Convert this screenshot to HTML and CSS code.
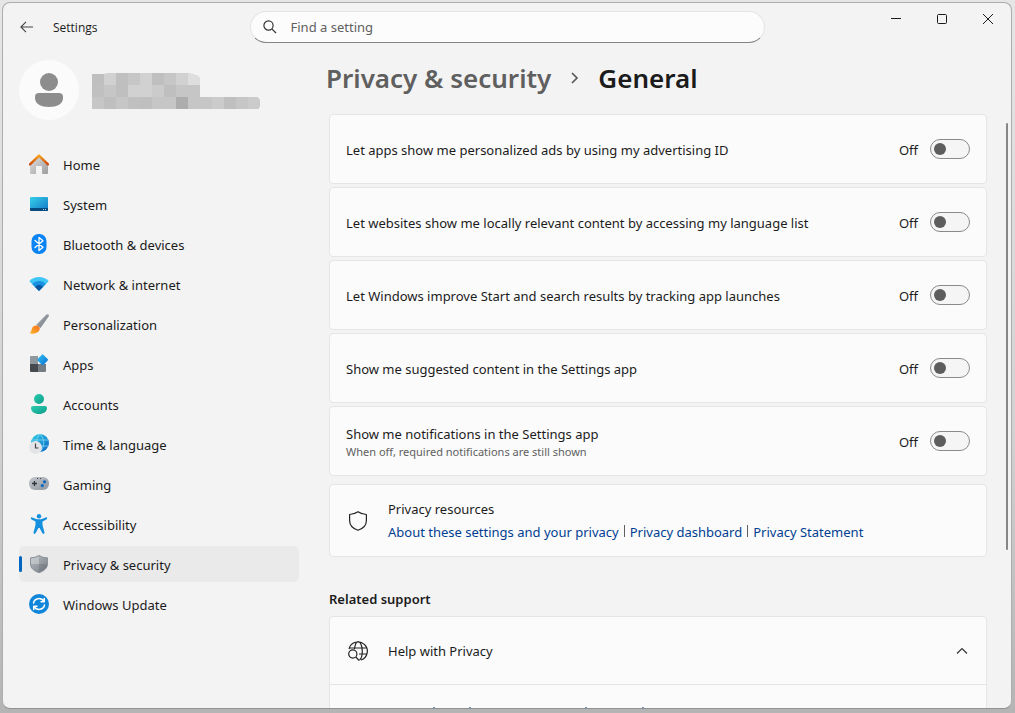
FILE: index.html
```html
<!DOCTYPE html>
<html lang="en">
<head>
<meta charset="utf-8">
<title>Settings</title>
<link rel="stylesheet" href="styles.css">
</head>
<body>
<div class="window">
  <header class="titlebar">
    <div class="titlebar-start">
      <button class="back" aria-label="Back"><svg width="14" height="12" viewBox="0 0 14 12" fill="none" stroke="#444" stroke-width="1.1"><path d="M6 .8.9 6 6 11.200M1 6h12"/></svg></button>
      <span class="app-name">Settings</span>
    </div>
    <div class="search">
      <svg width="14" height="14" viewBox="0 0 14 14" fill="none" stroke="#333" stroke-width="1.2"><circle cx="5.500" cy="5.500" r="4.600"/><path d="M8.800 8.800 13 13"/></svg>
      <input type="search" placeholder="Find a setting" aria-label="Find a setting">
    </div>
    <div class="caption-buttons">
      <button aria-label="Minimize"><svg width="12" height="12" viewBox="0 0 12 12" stroke="#1a1a1a"><path d="M1 5.500h10"/></svg></button>
      <button aria-label="Maximize"><svg width="12" height="12" viewBox="0 0 12 12" fill="none" stroke="#1a1a1a"><rect x="1.500" y="1.500" width="9" height="9" rx="1"/></svg></button>
      <button aria-label="Close"><svg width="12" height="12" viewBox="0 0 12 12" stroke="#1a1a1a"><path d="m1 1 10 10M11 1 1 11"/></svg></button>
    </div>
  </header>

  <div class="body">
    <aside class="sidebar">
      <div class="account">
        <div class="avatar"><svg width="28" height="34" viewBox="0 0 28 34" fill="#8d8d8d"><circle cx="14" cy="9" r="9"/><path d="M4 20h20a4 4 0 0 1 4 4v1c0 6-6 9-14 9S0 31 0 25v-1a4 4 0 0 1 4-4z"/></svg></div>
        <svg class="account-name" width="168" height="37" viewBox="0 0 168 37" role="img" aria-label="Account name hidden">
          <defs><clipPath id="mask"><path d="M0 2h12q4-1 12-1h66q14 0 18 5v19h56q4 0 4 6t-3 6H0z"/></clipPath></defs>
          <g clip-path="url(#mask)"><g transform="translate(0 1)">
            <path fill="#c6c6c6" d="M0 0h168v36H0z"/>
            <path fill="#bfbfbf" d="M0 0h12v12H0zM24 0h12v12H24zM60 0h12v12H60zM24 12h12v12H24zM72 12h12v12H72zM12 24h12v12H12zM48 24h12v12H48zM132 24h12v12h-12z"/>
            <path fill="#d1d1d1" d="M12 0h12v12H12zM48 0h12v12H48zM84 0h12v12H84zM36 12h12v12H36zM48 12h12v12H48z"/>
            <path fill="#dedede" d="M96 0h12v12H96z"/>
            <path fill="#c0c0c0" d="M0 12h12v12H0zM36 24h12v12H36z"/>
            <path fill="#adadad" d="M84 24h12v12H84z"/>
            <path fill="#cbcbcb" d="M60 12h12v12H60zM156 24h12v12h-12zM120 24h12v12h-12z"/>
          </g></g>
        </svg>
      </div>

      <nav class="nav" aria-label="Settings">
        <a href="#home">
          <svg width="20" height="20" viewBox="0 0 20 20"><defs><linearGradient id="h1" x2="1" y2="1"><stop stop-color="#e3e3e3"/><stop offset="1" stop-color="#9d9d9d"/></linearGradient><linearGradient id="h2" x2="0" y2="1"><stop stop-color="#f7a11b"/><stop offset="1" stop-color="#cf4a0c"/></linearGradient></defs><path fill="url(#h1)" d="M1 9 10 1l9 8v10a1 1 0 0 1-1 1h-5v-7.500a.5.5 0 0 0-.5-.5h-5a.5.5 0 0 0-.5.5V20H2a1 1 0 0 1-1-1z"/><path d="m1 10.300 9-8.700 9 8.700" fill="none" stroke="url(#h2)" stroke-width="2.400" stroke-linecap="round" stroke-linejoin="round"/></svg>
          <span>Home</span></a>
        <a href="#system">
          <svg width="20" height="20" viewBox="0 0 20 20"><defs><linearGradient id="s1" x2="1" y2="1"><stop stop-color="#36cfe9"/><stop offset="1" stop-color="#1277c8"/></linearGradient></defs><rect x="1" y="3" width="18" height="14" rx="1" fill="url(#s1)"/><path fill="#094a7e" d="M1 14h18v2a1 1 0 0 1-1 1H2a1 1 0 0 1-1-1z"/><path fill="#9cdcff" d="M14 15h1v1h-1zM16 15h1v1h-1z"/></svg>
          <span>System</span></a>
        <a href="#bluetooth">
          <svg width="20" height="20" viewBox="0 0 20 20"><rect x="2.500" width="15" height="20" rx="7" fill="#0a84f4"/><path d="m6 6.500 8 6.800-4 3.200v-13l4 3.200-8 6.800" fill="none" stroke="#fff" stroke-width="1.300" stroke-linejoin="round" stroke-linecap="round"/></svg>
          <span>Bluetooth &amp; devices</span></a>
        <a href="#network">
          <svg width="20" height="20" viewBox="0 0 20 20"><path fill="#3fc6f5" d="M.3 7.200C5.500 1.600 14.500 1.600 19.700 7.200L10 17z"/><path fill="#1791e0" d="M3.200 10.100c3.800-4.200 9.800-4.200 13.600 0L10 17z"/><path fill="#0b559f" d="M6.100 13c2.200-2.600 5.600-2.600 7.800 0l-3.500 3.600q-.4.400-.8 0z"/></svg>
          <span>Network &amp; internet</span></a>
        <a href="#personalization">
          <svg width="20" height="20" viewBox="0 0 20 20"><defs><linearGradient id="p1" x2="1" y2="1"><stop stop-color="#b5bac0"/><stop offset="1" stop-color="#6a7079"/></linearGradient><linearGradient id="p2" x1="1" x2="0" y2="1"><stop stop-color="#f3701e"/><stop offset="1" stop-color="#fdb52a"/></linearGradient></defs><path fill="url(#p1)" d="M17.500.4q1.300-.5 2 .2.700.8.1 2L11.500 14 7.300 10.800z"/><path fill="url(#p2)" d="M7.200 11.400c2.600-.2 4.400 2.300 3.200 4.800C8.800 19.400 4 20.400.4 19.200c2.400-1.300 1.700-3 2.600-5 .8-1.800 2.300-2.700 4.200-2.800z"/></svg>
          <span>Personalization</span></a>
        <a href="#apps">
          <svg width="20" height="20" viewBox="0 0 20 20"><defs><linearGradient id="a1" x2="1" y2="1"><stop stop-color="#2fc3f4"/><stop offset="1" stop-color="#0a6fd0"/></linearGradient></defs><path fill="#8f979f" d="M2 2h7v8H1V3a1 1 0 0 1 1-1z"/><path fill="#454a4f" d="M1 10h8v8H2a1 1 0 0 1-1-1z"/><path fill="#747c84" d="M9 10h8v7a1 1 0 0 1-1 1H9z"/><path fill="url(#a1)" d="m12.900.7-4.300 4.400a1 1 0 0 0 0 1.400l4.400 4.400a1 1 0 0 0 1.400 0l4.300-4.400a1 1 0 0 0 0-1.400L14.300.7a1 1 0 0 0-1.400 0z"/></svg>
          <span>Apps</span></a>
        <a href="#accounts">
          <svg width="20" height="20" viewBox="0 0 20 20"><defs><linearGradient id="c1" x2="1" y2="1"><stop stop-color="#2bcdb0"/><stop offset="1" stop-color="#0d9c8a"/></linearGradient></defs><g fill="url(#c1)"><circle cx="10" cy="5" r="5"/><path d="M4 12h12a2 2 0 0 1 2 2c0 3.800-3.500 6-8 6s-8-2.200-8-6a2 2 0 0 1 2-2z"/></g></svg>
          <span>Accounts</span></a>
        <a href="#time">
          <svg width="20" height="20" viewBox="0 0 20 20"><defs><linearGradient id="t1" x2="1" y2="1"><stop stop-color="#35d0e4"/><stop offset="1" stop-color="#0b62c4"/></linearGradient></defs><circle cx="11" cy="9" r="9" fill="url(#t1)"/><path fill="none" stroke="#8ce4fa" stroke-width=".7" d="M3 6h16M3 12h16M11 .3c-5 5-5 12.500 0 17.400M11 .3c5 5 5 12.500 0 17.400"/><circle cx="6.500" cy="13.500" r="6.500" fill="#e3e4e7"/><path d="M6.500 9.500V14H9.500" fill="none" stroke="#444" stroke-width="1.200"/></svg>
          <span>Time &amp; language</span></a>
        <a href="#gaming">
          <svg width="20" height="20" viewBox="0 0 20 20"><defs><linearGradient id="g1" x2="1" y2="1"><stop stop-color="#c3c8cd"/><stop offset="1" stop-color="#8e959c"/></linearGradient></defs><rect y="3" width="20" height="13" rx="6" fill="url(#g1)"/><path d="M3 9.500h5M5.500 7v5" stroke="#30353a" stroke-width="1.300"/><path fill="#444" d="M8 4h1v1H8zM11 4h1v1h-1z"/><circle cx="15.500" cy="7.800" r="1.600" fill="#0a67c4"/><circle cx="13.300" cy="11.600" r="1.600" fill="#0a67c4"/></svg>
          <span>Gaming</span></a>
        <a href="#accessibility">
          <svg width="20" height="20" viewBox="0 0 20 20" fill="#1490df"><circle cx="10" cy="2.200" r="2.200"/><path d="M3.200 3.400 8 5.200h4l4.800-1.800c1.500-.4 1.800 1.500.6 2L13.500 7.500V11l2 7.500c.3 1.400-1.700 2-2.200.6L10.600 14h-1.200L6.700 19.100c-.5 1.400-2.500.8-2.200-.6L6.500 11V7.500L2.600 5.400c-1.200-.5-.9-2.400.6-2z"/></svg>
          <span>Accessibility</span></a>
        <a href="#privacy" class="current" aria-current="page">
          <svg width="20" height="20" viewBox="0 0 20 20"><defs><linearGradient id="v1" x2="1" y2="1"><stop stop-color="#b9bfc5"/><stop offset="1" stop-color="#747b82"/></linearGradient></defs><path fill="url(#v1)" stroke="#8c939a" d="M10 1.500q3.500 2.300 8.500 2.300V10c0 4.200-3.500 7-8.500 8.700C5 17 1.500 14.200 1.500 10V3.800q5 0 8.500-2.300z"/><path fill="#d5d9dc" opacity=".5" d="M10 2.500V10H2V4.500Q6.500 4.500 10 2.500z"/><path fill="#60676f" opacity=".3" d="M10 10h8c0 4-3.500 6.700-8 8.200z"/></svg>
          <span>Privacy &amp; security</span></a>
        <a href="#update">
          <svg width="20" height="20" viewBox="0 0 20 20"><circle cx="10" cy="10" r="10" fill="#0f86d9"/><path fill="none" stroke="#fff" stroke-width="1.500" stroke-linecap="round" stroke-linejoin="round" d="M4.500 9C5.500 4 12 3 15 7.500M15.300 4.500v3.300h-3.300M15.500 11c-1 5-7.500 6-10.500 1.500M4.700 15.500v-3.300H8"/></svg>
          <span>Windows Update</span></a>
      </nav>
    </aside>

    <main class="main">
      <h1 class="crumbs"><a href="#privacy">Privacy &amp; security</a><svg width="8" height="12" viewBox="0 0 8 12" fill="none" stroke="#555" stroke-width="1.600"><path d="m1 1 5 5-5 5"/></svg><span>General</span></h1>

      <div class="cards">
        <label class="card"><span class="card-text">Let apps show me personalized ads by using my advertising ID</span><span>Off</span><input type="checkbox" role="switch" class="toggle"></label>
        <label class="card"><span class="card-text">Let websites show me locally relevant content by accessing my language list</span><span>Off</span><input type="checkbox" role="switch" class="toggle"></label>
        <label class="card"><span class="card-text">Let Windows improve Start and search results by tracking app launches</span><span>Off</span><input type="checkbox" role="switch" class="toggle"></label>
        <label class="card"><span class="card-text">Show me suggested content in the Settings app</span><span>Off</span><input type="checkbox" role="switch" class="toggle"></label>
        <label class="card"><span class="card-text">Show me notifications in the Settings app<small>When off, required notifications are still shown</small></span><span>Off</span><input type="checkbox" role="switch" class="toggle"></label>
      </div>

      <section class="card resources">
        <svg width="20" height="20" viewBox="0 0 20 20" fill="none" stroke="#222" stroke-width="1.200" stroke-linejoin="round"><path d="M10 .8q3.500 2.500 8.400 2.700V9.500c0 4.700-3 8-8.400 9.800C4.600 17.500 1.600 14.200 1.600 9.500v-6Q6.500 3.300 10 .8z"/></svg>
        <div>
          <div>Privacy resources</div>
          <div class="links"><a href="#about">About these settings and your privacy</a><a href="#dashboard">Privacy dashboard</a><a href="#statement">Privacy Statement</a></div>
        </div>
      </section>

      <h2 class="section-title">Related support</h2>
      <section class="expander">
        <button class="expander-head" aria-expanded="true">
          <svg width="20" height="20" viewBox="0 0 20 20" fill="none" stroke="#222" stroke-width="1.200"><path d="M1 8A9.300 9.300 0 1 1 13 19M1.500 7h17.200M11 13h7.800M6.500 8C7 3.500 8.500.7 10.300.7S14.300 4.500 14.300 10s-1.300 8-2.800 9"/><circle cx="4.800" cy="13" r="4.100"/><path d="m7.800 16 3.400 3.600"/></svg>
          <span>Help with Privacy</span>
          <svg width="12" height="8" viewBox="0 0 12 8" fill="none" stroke="#333" stroke-width="1.200"><path d="m1 6.500 5-5 5 5"/></svg>
        </button>
        <div class="expander-body">
          <svg width="256" height="2" viewBox="0 0 256 2" fill="#6f8fb8" aria-hidden="true"><path d="M45 1h2v1h-2zM81 1h2v1h-2zM197 1h2v1h-2zM254 1h2v1h-2z"/></svg>
        </div>
      </section>
    </main>
    <div class="scroll-thumb"></div>
  </div>
</div>
</body>
</html>
```
FILE: styles.css
```css
* { box-sizing: border-box; }

body {
  margin: 0;
  height: 100vh;
  padding: 2px 3px 4px 2px;
  display: flex;
  overflow: hidden;
  background: linear-gradient(#e6e6e6, #d2d2d2 60%, #b4b4b4);
  color: #1b1b1b;
  font: 13px/20px "Noto Sans", "Open Sans", sans-serif;
}

button, input { font: inherit; color: inherit; }
button { border: 0; background: none; padding: 0; }
a { color: inherit; text-decoration: none; }
svg { flex: none; display: block; }

.window {
  flex: 1;
  min-width: 0;
  display: flex;
  flex-direction: column;
  overflow: hidden;
  border: 1px solid #adadad;
  border-bottom-color: #929292;
  border-radius: 8px;
  background: #f3f3f3;
}

.titlebar {
  flex: none;
  height: 48px;
  display: grid;
  grid-template-columns: 1fr minmax(0, 515px) 1fr;
  align-items: center;
}
.titlebar-start { display: flex; align-items: center; gap: 19px; padding-left: 17px; }
.back { padding: 4px 0; }
.app-name { font-size: 12px; line-height: 20px; padding-top: 2px; font-family: "Open Sans", "Noto Sans", sans-serif; }

.search {
  height: 32px;
  display: flex;
  align-items: center;
  gap: 14px;
  padding: 0 12px;
  border: 1px solid #e3e3e3;
  border-bottom-color: #858585;
  border-radius: 16px;
  background: #fcfcfc;
}
.search input { flex: 1; min-width: 0; padding: 0; border: 0; outline: 0; background: none; }
.search input::placeholder { color: #606060; opacity: 1; }

.caption-buttons { display: flex; justify-content: flex-end; align-self: start; }
.caption-buttons button { width: 46px; height: 32px; display: grid; place-items: center; }

.body { flex: 1; min-height: 0; display: flex; position: relative; }

.sidebar { flex: none; width: 296px; padding: 9px 0 0 16px; }
.account { display: flex; align-items: center; gap: 13px; margin-bottom: 26px; }
.avatar { width: 60px; height: 60px; display: grid; place-items: center; border-radius: 50%; background: #fbfbfb; }

.nav { display: flex; flex-direction: column; gap: 4px; }
.nav a {
  height: 36px;
  display: flex;
  align-items: center;
  gap: 14px;
  padding: 0 10px;
  border-radius: 5px;
  position: relative;
}
.nav span { padding-top: 2px; }
.nav .current { background: #eaeaea; }
.nav .current::before {
  content: "";
  position: absolute;
  left: 0;
  top: 10px;
  width: 3px;
  height: 16px;
  border-radius: 2px;
  background: #0067c0;
}

.main { flex: 1; min-width: 0; padding: 9px 24px 0 30px; overflow: hidden; }

.crumbs {
  display: flex;
  align-items: center;
  gap: 20px;
  margin: 0 0 18px -3px;
  font-size: 26px;
  line-height: 36px;
  font-weight: 600;
}
.crumbs a { color: #5f5f5f; }
.crumbs svg { margin: 0 -1px 0 0; }

.cards { display: flex; flex-direction: column; gap: 3px; }
.card {
  min-height: 70px;
  display: flex;
  align-items: center;
  gap: 12px;
  padding: 0 16px;
  border: 1px solid #e5e5e5;
  border-radius: 4px;
  background: #fbfbfb;
}
.card > span { padding-top: 2px; }
.card-text { flex: 1; }
.card small { display: block; font-size: 11px; line-height: 16px; color: #606060; }

.toggle {
  appearance: none;
  flex: none;
  width: 40px;
  height: 20px;
  margin: 0;
  display: flex;
  align-items: center;
  padding: 0 3px;
  border: 1px solid #8a8a8a;
  border-radius: 10px;
  background: #f5f5f5;
}
.toggle::before { content: ""; width: 12px; height: 12px; border-radius: 50%; background: #5d5d5d; }
.toggle:checked { justify-content: flex-end; background: #0067c0; }
.toggle:checked::before { background: #fff; }

.resources { min-height: 73px; margin-top: 8px; padding: 0 18px; gap: 20px; line-height: 23px; }
.links { display: flex; flex-wrap: wrap; color: #003e92; }
.links a { line-height: 23px; }
.links a + a::before {
  content: "";
  display: inline-block;
  width: 1px;
  height: 12px;
  margin: 0 5px;
  background: #5f5f5f;
}

.section-title { margin: 32px 0 7px; font-size: 13px; line-height: 20px; font-weight: 600; }
.expander { border: 1px solid #e5e5e5; border-radius: 4px; background: #fbfbfb; }
.expander-head {
  width: 100%;
  height: 68px;
  display: flex;
  align-items: center;
  gap: 20px;
  padding: 0 18px;
  border-bottom: 1px solid #e5e5e5;
  text-align: left;
}
.expander-head span { flex: 1; }
.expander-body { min-height: 64px; padding: 21px 58px; }

.scroll-thumb {
  position: absolute;
  right: 3px;
  top: 11%;
  width: 2px;
  height: 65%;
  border-radius: 1px;
  background: #868686;
}
```
